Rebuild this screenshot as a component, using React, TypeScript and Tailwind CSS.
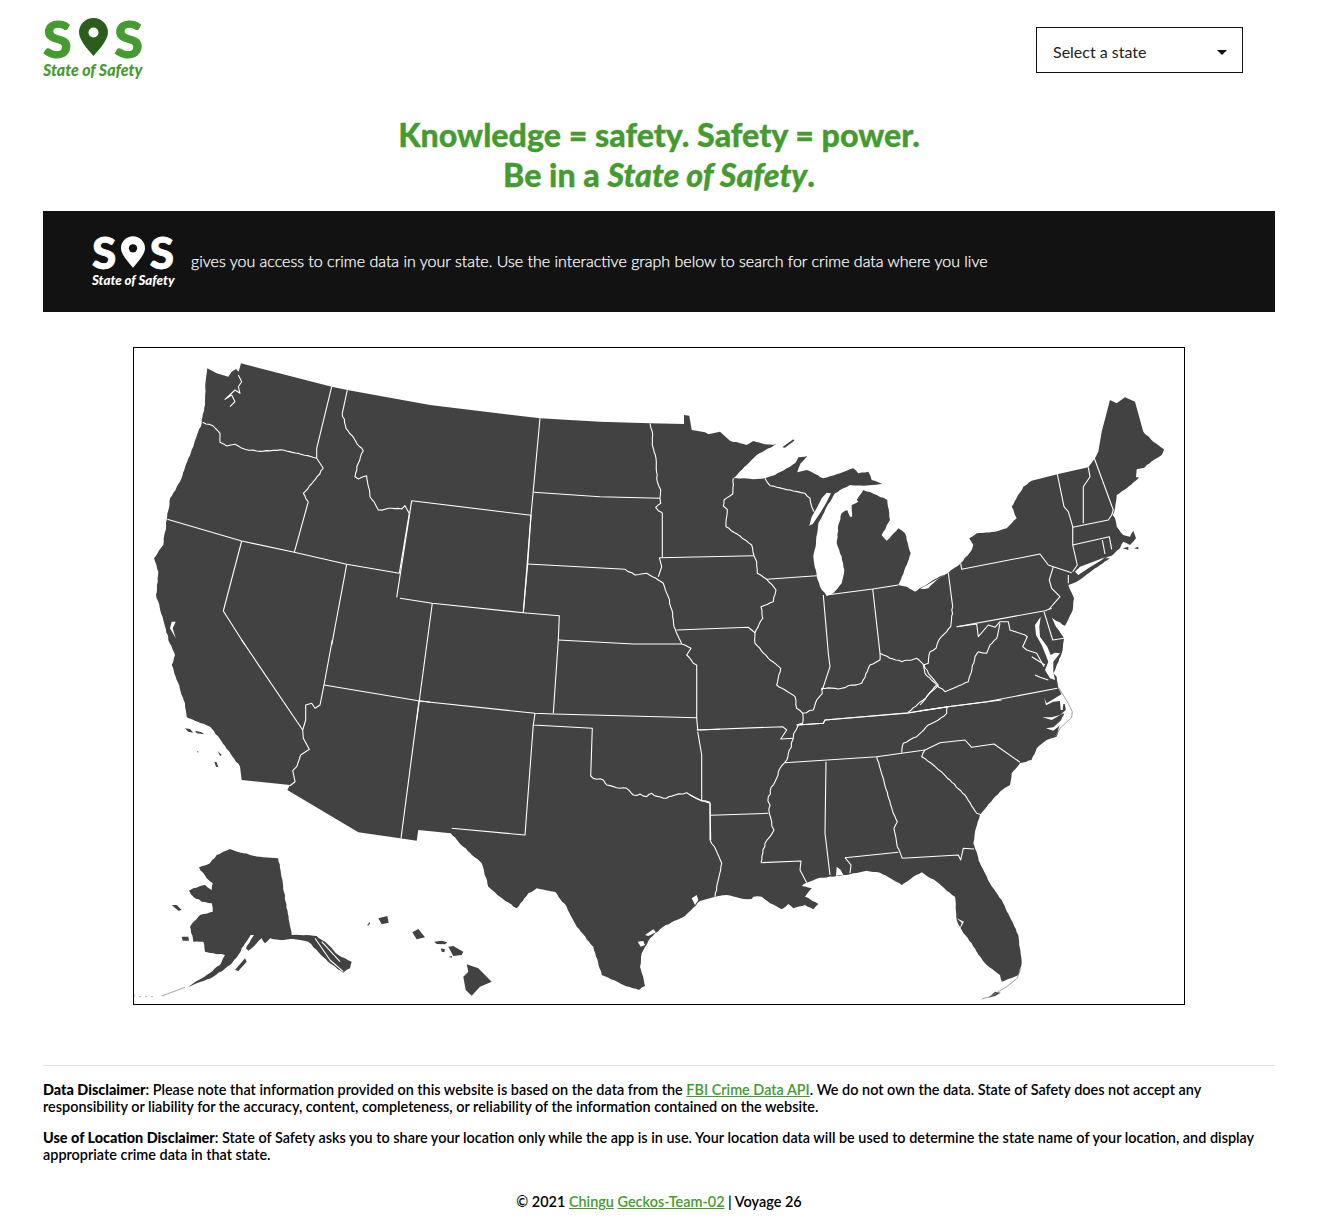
import React from "react";

// crop origins the outlines were traced from (points are in 3x crop pixels)
type Origin = [number, number];
const NW: Origin = [130, 345];
const SW: Origin = [130, 640];
const NC: Origin = [400, 400];
const SC: Origin = [400, 700];
const MW: Origin = [650, 410];
const NE: Origin = [920, 390];
const SE: Origin = [690, 700];
const BAY: Origin = [1010, 600];
const CAPE: Origin = [1060, 500];

const nums = (o: Origin, s: string) =>
  s.trim().split(/\s+/).map((p) => {
    const [x, y] = p.split(",").map(Number);
    return [o[0] + x / 3, o[1] + y / 3];
  });

const pts = (o: Origin, s: string) => nums(o, s).map(([x, y]) => `${x.toFixed(1)} ${y.toFixed(1)}`);

// same points, with a small fixed jitter so rivers and coasts aren't ruler straight
const rough = (o: Origin, s: string, amp = 0.6) => {
  const p = nums(o, s);
  const out: string[] = [];
  let seed = 1;
  p.forEach(([x, y], i) => {
    out.push(`${x.toFixed(1)} ${y.toFixed(1)}`);
    if (i === p.length - 1) return;
    const [nx, ny] = p[i + 1];
    const len = Math.hypot(nx - x, ny - y);
    const n = Math.floor(len / 3);
    for (let j = 1; j < n; j++) {
      const r = Math.sin(seed++ * 12.9898) * 43758.5453;
      const off = (r - Math.floor(r) - 0.5) * 2 * amp;
      const t = j / n;
      const px = x + (nx - x) * t - ((ny - y) / len) * off;
      const py = y + (ny - y) * t + ((nx - x) / len) * off;
      out.push(`${px.toFixed(1)} ${py.toFixed(1)}`);
    }
  });
  return out;
};

const open = (o: Origin, s: string) => "M" + pts(o, s).join("L");
const shut = (o: Origin, s: string) => open(o, s) + "Z";
const river = (o: Origin, s: string, amp = 0.7) => "M" + rough(o, s, amp).join("L");

const mainland =
  "M" +
  [
    ...pts(NW, "232,70 260,85 295,95 305,80 318,72 326,80 333,55 605,125 652,135 900,180"),
    ...pts(NC, "420,55 600,65 750,70 852,72 852,45 868,47 875,90 915,97 925,103 960,95"),
    ...rough(MW, "240,92 290,105 310,93 345,103 380,103 320,135 290,165 250,205 320,207 345,205 375,195 410,175 435,160 445,142 472,138 452,160 442,187 470,180 520,205 570,190 610,175 625,190 655,185 665,210 697,222 640,227 600,225 570,240 555,250 530,290 505,340 498,400 490,440 500,500 510,530 530,558 550,550 575,520 583,480 575,440 560,400 565,345 575,310 592,300 600,320 607,320 605,285 625,275 620,270 640,240 680,255 712,270 720,330 695,375 710,392 745,355 765,370 782,430 770,465 745,525 770,530 795,545 850,510 895,488", 0.4),
    ...rough(NE, "0,597 25,595 50,570 85,548 122,520 155,480 160,465 148,445 170,430 225,425 260,415 290,385 275,350 310,290 335,272", 0.4),
    ...pts(NE, "415,252 505,232 525,205 535,185 545,125 570,30 590,40 615,22 645,35"),
    ...rough(NE, "670,125 700,155 732,178 725,195 680,225 655,265 620,295 590,315 585,355 578,375 585,385 590,410 610,435 630,440 640,422 648,445 630,465 610,455 600,475 575,497 555,505 570,505 540,525 470,575 445,585 462,625 458,660 435,707 395,683 405,705 432,745 425,790 400,850 410,860 415,895 425,915 435,945 438,965 425,985 410,1040 380,1050 350,1075 335,1108", 0.4),
    ...rough(SE, "1025,180 990,190 965,220 960,255 930,275 890,320 870,345 855,395 850,430 870,490 900,550 935,600 985,705 995,790 985,825 935,845 930,825 885,790 860,755 845,730 815,690 800,660 795,590 770,572 740,545 695,517 670,530 635,555 610,540 570,518 530,512 480,523 430,530 390,533 350,548 335,558 365,565 345,590 385,612 370,628 345,615 310,625 295,612 275,628 240,610 215,590 190,590 185,597 150,595 110,585 75,590", 0.4),
    ...rough(SC, "900,603 855,648 790,680 750,715 725,760 720,800 735,858 717,870 670,855 605,825 580,740 530,680 500,620 465,575 410,565 385,580 350,625 300,590 265,560 245,490 190,440 152,400", 0.5),
    ...pts(SC, "55,390 50,422"),
    ...pts(SW, "810,595 685,577 472,450 480,435 335,420"),
    ...rough(SW, "330,380 285,318 240,260 170,232 165,190 125,75 135,45 115,0", 0.5),
    ...rough(NW, "115,880 100,825 78,750 85,680 72,640 100,600 110,525 120,460 150,410 215,235 225,180 228,100", 0.5),
  ].join("L") +
  "Z";

const darkShapes = [
  // alaska
  "M" + rough(SW, "445,655 485,885 510,885 560,888 590,910 625,945 665,965 660,985 640,998 600,970 560,930 535,905 510,900 490,897 450,900 420,895 405,910 395,895 380,910 355,932 348,925 372,885 362,885 335,925 325,945 300,975 250,1010 200,1030 165,1045 190,1030 230,1005 270,975 285,945 250,940 225,935 220,905 190,905 180,860 210,825 248,815 245,790 215,785 190,770 177,752 190,745 225,735 245,750 248,730 230,715 207,682 240,670 260,645 300,627 340,640 400,652", 0.5).join("L") + "Z",
  shut(SW, "345,955 315,990 325,993 350,965"),
  shut(SW, "155,890 175,890 177,902 158,902"),
  shut(SW, "125,795 140,795 155,810 145,812"),
  // hawaii
  shut(SW, "745,835 772,828 776,848 755,853"),
  shut(SW, "712,855 720,845 720,850 714,858"),
  shut(SC, "37,697 55,687 75,712 50,718"),
  shut(SC, "103,725 125,722 142,727 135,733 110,732"),
  shut(SC, "122,745 135,748 133,757 125,755"),
  shut(SC, "145,740 160,738 190,755 185,765 160,768"),
  shut(SC, "145,770 157,768 155,773"),
  shut(SC, "200,793 235,805 275,845 240,860 215,887 197,870 190,830 205,815"),
  // channel islands
  shut(SW, "165,265 180,267 190,278 175,275"),
  shut(SW, "195,272 215,277 222,283 200,280"),
  shut(SW, "263,333 275,345 270,348"),
  shut(SW, "253,365 260,367 265,382 258,380"),
  shut(SW, "200,332 206,335 204,338"),
  // isle royale
  shut(MW, "397,112 430,88 433,92 405,113"),
  // keys tip
  shut(SE, "895,893 915,875 932,878 915,888"),
  // nantucket, vineyard
  shut(CAPE, "188,145 205,140 205,150"),
  shut(CAPE, "222,145 235,140 235,148"),
];

const whiteShapes = [
  // green bay
  shut(MW, "478,347 488,342 510,310 528,280 543,250 530,248 515,265 500,295 485,320"),
  // chesapeake
  shut(BAY, "92,50 75,75 78,105 95,135 105,160 115,185 105,210 120,235 135,240 130,215 130,185 150,160 135,158 122,165 112,140 90,110 88,80"),
  // long island sound
  shut(CAPE, "45,215 60,200 100,185 135,172 125,180 85,205 55,225"),
  // nc sounds
  shut(BAY, "103,295 108,316 130,305 150,303 152,330 158,330 160,312 168,312 155,282 130,298 110,310"),
  shut(BAY, "97,352 125,360 160,340 165,350 130,382 108,385 130,392 175,355 170,328 150,345 125,352"),
  // texas bays
  shut(SC, "875,595 890,585 895,600 885,615"),
  shut(SC, "760,688 768,697 745,708 735,705"),
  shut(SC, "713,725 730,723 735,735 722,740"),
  // sf bay
  shut(NW, "125,830 137,830 128,850 137,880 120,850"),
  // tampa, mobile, maine
  shut(SE, "800,655 822,665 808,690 815,668"),
  shut(SE, "440,500 452,510 460,525 438,527"),
  shut(NE, "650,238 680,232 662,262 648,262"),
];

const greyLines = [
  // outer banks
  open(BAY, "145,262 175,310 187,335 185,352 150,385 137,408"),
  // florida keys
  open(SE, "992,805 982,835 950,860 900,890 875,897"),
  // aleutians
  open(SW, "165,1042 130,1055 95,1068"),
];

const borders: string[] = [
  // puget sound
  open(NW, "325,90 335,110 325,125 330,145 315,135 285,163 305,150 315,170 300,185"),
  // alaska panhandle channels
  open(SW, "555,895 600,960 640,995"),
  open(SW, "575,905 630,965"),
  // bay tributaries
  open(BAY, "65,170 105,195"),
  open(BAY, "75,225 90,232 115,240"),
  // west
  open(NW, "605,125 560,310 560,340 580,370"),
  river(NW, "580,370 550,410 520,445 535,470"),
  open(NW, "535,470 493,622"),
  river(NW, "218,232 250,243 270,265 270,292 290,303 315,298 345,313 380,318 460,315 560,340", 0.5),
  open(NW, "652,135 637,205"),
  river(NW, "637,205 648,250 700,318 685,355 675,395 685,402 710,392 720,455 745,495 775,490 815,492 825,482 838,505"),
  open(NW, "838,505 808,685"),
  open(NW, "112,523 335,588 493,622 650,658 808,685"),
  open(NW, "845,467 800,757"),
  open(NC, "35,302 393,346 370,638"),
  open(NC, "0,595 97,610 370,638 478,647 475,720 460,940"),
  open(NW, "335,588 280,798 345,900"),
  open(SW, "335,0 518,270"),
  open(NW, "650,658 605,900"),
  open(SW, "607,0 582,135 570,195 555,205 545,190 527,195 527,240 518,270 520,295 538,328 512,345 500,380 488,392 495,425 480,437"),
  open(SW, "582,135 865,182 900,186"),
  open(SC, "57,3 405,40 460,42 890,53 893,90"),
  open(NC, "97,610 50,960"),
  open(SC, "57,3 3,415"),
  // plains
  open(NC, "420,55 393,346 383,492 370,638"),
  open(NC, "401,277 600,290 780,295"),
  river(NC, "750,70 757,95 757,135 768,175 772,245 782,270 780,295 782,310 767,322 775,332 787,338", 0.4),
  open(NC, "787,338 787,472"),
  open(NC, "778,472 785,500 775,530"),
  open(MW, "30,443 312,437"),
  open(NC, "383,492 675,508"),
  river(NC, "675,508 705,525 740,520 775,540 790,550 805,590 818,640 822,680 845,732 873,745 860,765 880,790 890,795", 0.5),
  open(NC, "890,795 890,955"),
  open(NC, "475,720 700,732 845,732"),
  open(MW, "80,660 295,652 315,668"),
  open(SC, "893,90 960,88"),
  open(SE, "20,90 278,80 290,90 272,117 310,115"),
  open(SC, "893,95 905,165 905,300"),
  open(SC, "405,40 400,75 577,85 572,228"),
  river(SC, "572,228 590,238 610,240 620,255 660,265 680,265 700,285 720,282 740,290 755,280 790,295 825,285 860,278 880,290 905,303 930,307", 1),
  open(SC, "930,307 932,420"),
  open(SC, "155,385 375,405 400,75"),
  open(SE, "62,346 235,340"),
  river(SE, "60,420 78,450 95,490 85,540 75,590", 0.4),
  open(SE, "60,310 60,420"),
  open(SE, "0,285 30,300 60,310"),
  // mississippi
  river(SE, "325,75 318,90 310,115 304,130 298,150 290,180 270,205 265,215 255,245 235,290 240,315 238,340 245,365 252,390 240,410 225,430 213,488", 1.3),
  open(SE, "213,488 333,483 330,510 350,548"),
  // tennessee and south
  open(SE, "285,188 560,170 705,150"),
  open(SE, "325,75 400,70 405,60 650,40 772,20 935,0"),
  open(NE, "0,962 85,950 200,935 412,895"),
  river(SE, "772,20 770,40 745,60 715,75 680,110 640,130 635,158", 0.5),
  open(SE, "408,185 405,400 420,525"),
  river(SE, "560,170 610,340 622,365 612,385 622,440 637,475", 0.3),
  open(SE, "637,475 805,465 812,480 820,445 852,447"),
  open(SE, "465,473 625,457"),
  open(SE, "465,473 483,495 480,520"),
  river(SE, "705,150 695,170 730,195 780,240 825,285 860,340 875,345", 0.5),
  open(SE, "705,150 750,128 825,120 845,142 912,132 990,187"),
  // great lakes states
  river(MW, "250,205 248,252 222,270 220,288 232,298 228,350 270,378 305,405 312,437 320,455 322,490 350,508 378,540 370,575 333,590 338,625 315,668 315,700 360,750 392,775 380,825 435,860 440,895 458,910 458,940 440,945", 0.5),
  open(MW, "350,508 500,497"),
  river(MW, "345,205 360,227 430,243 465,250 480,265 485,290 492,305", 0.4),
  open(MW, "520,555 535,730 540,770 517,840"),
  river(MW, "458,910 490,900 500,870 517,850 515,835 575,835 605,825 635,820 660,765 690,750 690,730 720,745 755,755 800,745 822,765", 0.7),
  open(MW, "668,537 690,730"),
  open(MW, "530,555 668,537 745,525"),
  open(MW, "440,945 520,940 525,930 775,908 895,890"),
  river(MW, "822,765 835,790 865,825 820,870 775,907", 0.5),
  // appalachia
  open(NE, "85,548 98,650"),
  river(NE, "98,650 92,710 60,745 48,775 30,785 25,820 10,825 15,850 50,885 20,920 0,945", 0.6),
  river(NE, "50,885 75,905 100,895 145,875 165,800 175,785 200,790 210,765 230,745 240,700", 0.5),
  open(NE, "110,710 170,702 175,740 205,705 225,712 240,695 265,695 270,720 315,735 322,740 308,770 320,780 350,790 372,830"),
  open(NE, "110,710 375,662 395,655"),
  open(NE, "122,520 125,538 360,492 385,525 400,530 455,548"),
  open(NE, "400,530 388,570 395,595 420,620 385,660"),
  open(NE, "445,555 445,580"),
  open(NE, "372,665 398,750 432,745"),
  // new england
  open(NE, "412,252 432,350 445,365 458,410 458,465 472,525 458,545"),
  open(NE, "505,232 510,260 490,290 490,400"),
  open(NE, "523,205 580,360 575,375 565,390 458,412"),
  open(NE, "458,465 568,440 575,478"),
  open(NE, "547,450 555,492"),
];

const UsMap = () => (
  <svg viewBox="134 348 1050 656" className="block w-[1050px] h-[656px]">
    <path d={mainland} fill="#424242" />
    {darkShapes.map((d, i) => <path key={i} d={d} fill="#424242" />)}
    {whiteShapes.map((d, i) => <path key={i} d={d} fill="#ffffff" />)}
    {greyLines.map((d, i) => <path key={i} d={d} fill="none" stroke="#8a8a8a" strokeWidth="0.8" />)}
    <path d={open(SW, "10,1065 25,1070 60,1070 80,1068")} fill="none" stroke="#777777" strokeWidth="0.6" strokeDasharray="2 4" />
    {borders.map((d, i) => (
      <path key={i} d={d} fill="none" stroke="#ffffff" strokeWidth="1.1" strokeLinejoin="round" />
    ))}
  </svg>
);

const Pin = ({ body, hole, className }: { body: string; hole: string; className: string }) => (
  <svg viewBox="0 0 29 38" className={className}>
    <path d="M14.5 0C6.4 0 0 6.3 0 14.2c0 8 8.5 16.5 14.5 23.8C20.5 30.7 29 22.2 29 14.2 29 6.3 22.6 0 14.5 0Z" fill={body} />
    <circle cx="14.5" cy="14.5" r="5" fill={hole} />
  </svg>
);

const App = () => {
  return (
    <div className="w-[1320px] h-[1232px] bg-white pl-[43px] pr-[45px] font-['Lato','Open_Sans',sans-serif] text-black">
      {/* header */}
      <div className="flex justify-between h-[115px]">
        <div className="flex flex-col pt-[16px] w-[100px]">
          <div className="flex items-center justify-between h-[44px] text-[#469b30] text-[52px] font-black leading-none [-webkit-text-stroke:1px_#469b30]">
            <span>S</span>
            <Pin body="#2b5e1b" hole="#ffffff" className="w-[29px] h-[38px] mt-[-2px]" />
            <span>S</span>
          </div>
          <div className="text-[#469b30] text-[16px] font-black italic leading-[18px] whitespace-nowrap mt-[1px]">State of Safety</div>
        </div>
        <div className="mt-[27px] mr-[32px] w-[207px] h-[46px] border border-[#111111] flex items-center justify-between pl-4 pr-[15px] pt-[4px] text-[#212121] text-base">
          <span>Select a state</span>
          <span className="w-0 h-0 border-x-[5px] border-x-transparent border-t-[5px] border-t-[#111111]"></span>
        </div>
      </div>

      <h1 className="text-center text-[#469b30] text-[32.2px] font-black leading-[39.5px] [-webkit-text-stroke:0.3px_#469b30]">
        Knowledge = safety. Safety = power.
        <br />
        Be in a <em>State of Safety</em>.
      </h1>

      {/* intro band */}
      <div className="mt-[17px] h-[101px] bg-[#121212] flex items-center pl-[49px] text-white">
        <div className="flex flex-col w-[82px]">
          <div className="flex items-center justify-between h-[33px] text-white text-[44px] font-black leading-none [-webkit-text-stroke:0.8px_#ffffff]">
            <span>S</span>
            <Pin body="#ffffff" hole="#121212" className="w-[24px] h-[32px]" />
            <span>S</span>
          </div>
          <div className="text-white text-[13.3px] font-black italic leading-[16px] whitespace-nowrap mt-[3px]">State of Safety</div>
        </div>
        <p className="ml-[17px] text-base font-light -mt-[2px] [-webkit-text-stroke:0.25px_#ffffff]">
          gives you access to crime data in your state. Use the interactive graph below to search for crime data where you live
        </p>
      </div>

      {/* map */}
      <div className="mt-[35px] ml-[90px] w-[1052px] h-[658px] border border-black">
        <UsMap />
      </div>

      {/* disclaimers */}
      <div className="mt-[60px] border-t border-[#e0e0e0] pt-[15px] text-[14.43px] leading-[17px] font-semibold">
        <p>
          <strong className="font-black">Data Disclaimer</strong>: Please note that information provided on this website is based on the data from the{" "}
          <a href="#" className="text-[#469b30] underline">FBI Crime Data API</a>. We do not own the data. State of Safety does not accept any responsibility or liability for the accuracy, content, completeness, or reliability of the information contained on the website.
        </p>
        <p className="mt-[14px]">
          <strong className="font-black">Use of Location Disclaimer</strong>: State of Safety asks you to share your location only while the app is in use. Your location data will be used to determine the state name of your location, and display appropriate crime data in that state.
        </p>
        <p className="mt-[30px] text-center">
          © 2021 <a href="#" className="text-[#469b30] underline">Chingu</a>{" "}
          <a href="#" className="text-[#469b30] underline">Geckos-Team-02</a> | Voyage 26
        </p>
      </div>
    </div>
  );
};

export default App;
